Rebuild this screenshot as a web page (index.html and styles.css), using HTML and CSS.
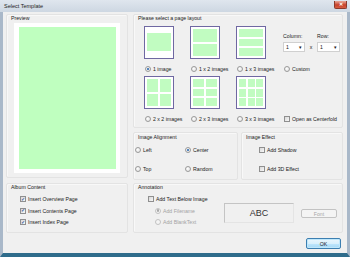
FILE: index.html
```html
<!DOCTYPE html>
<html lang="en">
<head>
    <meta charset="UTF-8">
    <title>Select Template</title>
    <link rel="stylesheet" href="styles.css">
</head>
<body>
<div class="window">
    <div class="titlebar">
        <span class="title">Select Template</span>
        <span class="close">✕</span>
    </div>
    <div class="client">
        <div class="top">
            <section class="group preview-group">
                <div class="legend">Preview</div>
                <div class="preview"><div class="preview-img"></div></div>
            </section>

            <div class="right">
                <section class="group layout-group">
                    <div class="legend">Please select a page layout</div>
                    <div class="layouts">
                        <div class="cell">
                            <div class="thumb t1"><i></i></div>
                            <div class="opt"><span class="radio checked"></span>1 image</div>
                        </div>
                        <div class="cell">
                            <div class="thumb t12"><i></i><i></i></div>
                            <div class="opt"><span class="radio"></span>1 x 2 images</div>
                        </div>
                        <div class="cell">
                            <div class="thumb t13"><i></i><i></i><i></i></div>
                            <div class="opt"><span class="radio"></span>1 x 3 images</div>
                        </div>
                        <div class="cell">
                            <div class="combos">
                                <div class="combo-col">
                                    <span>Column:</span>
                                    <div class="combo">1<b>▾</b></div>
                                </div>
                                <span class="times">x</span>
                                <div class="combo-col row-col">
                                    <span>Row:</span>
                                    <div class="combo">1<b>▾</b></div>
                                </div>
                            </div>
                            <div class="opt"><span class="radio"></span>Custom</div>
                        </div>

                        <div class="cell">
                            <div class="thumb t22"><i></i><i></i><i></i><i></i></div>
                            <div class="opt"><span class="radio"></span>2 x 2 images</div>
                        </div>
                        <div class="cell">
                            <div class="thumb t23"><i></i><i></i><i></i><i></i><i></i><i></i></div>
                            <div class="opt"><span class="radio"></span>2 x 3 images</div>
                        </div>
                        <div class="cell">
                            <div class="thumb t33"><i></i><i></i><i></i><i></i><i></i><i></i><i></i><i></i><i></i></div>
                            <div class="opt"><span class="radio"></span>3 x 3 images</div>
                        </div>
                        <div class="cell">
                            <div class="spacer"></div>
                            <div class="opt"><span class="check"></span>Open as Centerfold</div>
                        </div>
                    </div>
                </section>

                <div class="row2">
                    <section class="group align-group">
                        <div class="legend">Image Alignment</div>
                        <div class="align-grid">
                            <div class="opt"><span class="radio"></span>Left</div>
                            <div class="opt"><span class="radio checked"></span>Center</div>
                            <div class="opt"><span class="radio"></span>Top</div>
                            <div class="opt"><span class="radio"></span>Random</div>
                        </div>
                    </section>
                    <section class="group effect-group">
                        <div class="legend">Image Effect</div>
                        <div class="effect-list">
                            <div class="opt"><span class="check"></span>Add Shadow</div>
                            <div class="opt"><span class="check"></span>Add 3D Effect</div>
                        </div>
                    </section>
                </div>
            </div>
        </div>

        <div class="bottom">
            <section class="group album-group">
                <div class="legend">Album Content</div>
                <div class="album-list">
                    <div class="opt"><span class="check checked"></span>Insert Overview Page</div>
                    <div class="opt"><span class="check checked"></span>Insert Contents Page</div>
                    <div class="opt"><span class="check checked"></span>Insert Index Page</div>
                </div>
            </section>
            <section class="group annot-group">
                <div class="legend">Annotation</div>
                <div class="annot-body">
                    <div class="annot-list">
                        <div class="opt"><span class="check"></span>Add Text Below Image</div>
                        <div class="opt sub disabled"><span class="radio checked"></span>Add Filename</div>
                        <div class="opt sub disabled"><span class="radio"></span>Add BlankText</div>
                    </div>
                    <div class="sample">ABC</div>
                    <button class="btn font-btn" disabled>Font</button>
                </div>
            </section>
        </div>

        <div class="actions">
            <button class="btn ok">OK</button>
        </div>
    </div>
</div>
</body>
</html>
```

FILE: styles.css
```css
body {
    margin: 0;
    font-family: 'Liberation Sans', Arial, sans-serif;
    font-size: 5.2px;
    color: #1a1a1a;
    background: #f0f0f0;
}
.window {
    width: 350px;
    height: 257px;
    background: #f0f0f0;
}
.titlebar {
    height: 12px;
    display: flex;
    justify-content: space-between;
    align-items: flex-start;
    background: linear-gradient(#dfe6ee, #cdd7e2);
}
.title {
    margin-left: 4px;
    line-height: 12px;
    font-size: 5.5px;
    color: #222;
}
.close {
    width: 13px;
    height: 8px;
    margin: 1px 3px 0 0;
    border-radius: 0 0 2px 2px;
    background: linear-gradient(#e9a99a, #c7432c 55%, #d75c40);
    border: 1px solid #8b3a2c;
    border-top: none;
    box-sizing: border-box;
    color: #fff;
    font-size: 5px;
    line-height: 7px;
    text-align: center;
    font-weight: bold;
}
.client {
    height: 245px;
    box-sizing: border-box;
    border-left: 3px solid #a9b8c9;
    border-right: 3px solid #a9b8c9;
    border-bottom: 4px solid #2f6c8b;
    padding: 2px 4px 0 3px;
}
.group {
    box-sizing: border-box;
    border: 1px solid #e3e3e3;
    border-radius: 2px;
    box-shadow: inset 1px 1px 0 #f8f8f8;
}
.legend {
    height: 7px;
    line-height: 7px;
    padding-left: 4px;
    white-space: nowrap;
}

/* top area */
.top {
    display: flex;
    gap: 5px;
    height: 166px;
}
.preview-group {
    width: 122px;
    height: 164px;
}
.preview {
    width: 106px;
    height: 150px;
    margin: 1px 0 0 7px;
    padding: 4px 4px 4px 5px;
    box-sizing: border-box;
    background: #fff;
}
.preview-img {
    height: 100%;
    background: #bfffbf;
}
.right {
    width: 210px;
    display: flex;
    flex-direction: column;
    gap: 4px;
}
.layout-group {
    height: 114px;
}
.layouts {
    display: grid;
    grid-template-columns: 46px 46px 47px 1fr;
    row-gap: 3px;
    margin: 4px 0 0 10px;
}
.cell {
    display: flex;
    flex-direction: column;
}
.thumb {
    width: 30px;
    height: 33px;
    box-sizing: border-box;
    border: 1px solid #6f68a2;
    background: #fff;
    padding: 2px;
    display: grid;
    gap: 2px;
}
.thumb i {
    background: #c1fcc1;
}
.t1 {
    padding: 6px 2px 7px 2px;
}
.t12 {
    grid-template-rows: 1fr 1fr;
}
.t13 {
    grid-template-rows: 1fr 1fr 1fr;
}
.t22 {
    grid-template-columns: 1fr 1fr;
    grid-template-rows: 1fr 1fr;
}
.t23 {
    grid-template-columns: 1fr 1fr;
    grid-template-rows: 1fr 1fr 1fr;
}
.t33 {
    grid-template-columns: 1fr 1fr 1fr;
    grid-template-rows: 1fr 1fr 1fr;
    gap: 1.5px;
}
.spacer {
    height: 33px;
}
.combos {
    height: 33px;
    box-sizing: border-box;
    padding-top: 7px;
    display: flex;
    align-items: flex-start;
}
.combo-col {
    width: 22px;
    display: flex;
    flex-direction: column;
    gap: 2px;
    line-height: 7px;
}
.row-col {
    width: 23px;
}
.times {
    width: 12px;
    text-align: center;
    margin-top: 11px;
    line-height: 7px;
}
.combo {
    height: 10px;
    box-sizing: border-box;
    border: 1px solid #d0d0d0;
    background: #fff;
    display: flex;
    justify-content: space-between;
    align-items: center;
    padding: 0 2px 0 2px;
}
.combo b {
    font-weight: normal;
    font-size: 5px;
}
.opt {
    height: 8px;
    display: flex;
    align-items: center;
    gap: 2px;
    white-space: nowrap;
}
.cell .opt {
    margin-top: 6px;
    margin-left: 1px;
}
.radio {
    width: 6px;
    height: 6px;
    box-sizing: border-box;
    border-radius: 50%;
    border: 1px solid #9a9a9a;
    background: radial-gradient(circle at 40% 40%, #fff, #dcdcdc);
    display: flex;
    align-items: center;
    justify-content: center;
    flex: none;
}
.radio.checked::after {
    content: "";
    width: 2.5px;
    height: 2.5px;
    border-radius: 50%;
    background: #1f5fa8;
}
.check {
    width: 6px;
    height: 6px;
    box-sizing: border-box;
    border: 1px solid #8f8f8f;
    background: linear-gradient(135deg, #d9d9d9, #f7f7f7);
    flex: none;
    display: flex;
    align-items: center;
    justify-content: center;
    font-size: 5px;
    line-height: 5px;
    color: #2a4f9a;
}
.check.checked::after {
    content: "✓";
    font-weight: bold;
}

/* alignment & effect */
.row2 {
    display: flex;
    gap: 3px;
    height: 48px;
}
.row2 .legend {
    margin-top: 1px;
}
.align-group {
    width: 105px;
}
.align-grid {
    display: grid;
    grid-template-columns: 50px 1fr;
    row-gap: 11px;
    margin: 5px 0 0 1px;
}
.effect-group {
    width: 102px;
}
.effect-list {
    display: flex;
    flex-direction: column;
    gap: 11px;
    margin: 5px 0 0 17px;
}

/* bottom area */
.bottom {
    display: flex;
    gap: 5px;
    height: 50px;
    margin-top: 3px;
}
.album-group {
    width: 122px;
}
.album-list {
    display: flex;
    flex-direction: column;
    gap: 3.5px;
    margin: 4px 0 0 13px;
}
.annot-group {
    width: 210px;
}
.annot-body {
    display: flex;
    align-items: flex-start;
    margin: 4px 0 0 14px;
}
.annot-list {
    width: 76px;
    display: flex;
    flex-direction: column;
    gap: 3.5px;
}
.sub {
    padding-left: 7px;
}
.disabled {
    color: #a3a3a3;
}
.disabled .radio {
    border-color: #c2c2c2;
    background: #f4f4f4;
}
.disabled .radio.checked::after {
    background: #a8a8a8;
}
.sample {
    width: 70px;
    height: 20px;
    margin-top: 8px;
    box-sizing: border-box;
    border: 1px solid #c4c4c4;
    border-right-color: #e4e4e4;
    border-bottom-color: #e4e4e4;
    display: flex;
    align-items: center;
    justify-content: center;
    font-size: 9px;
    color: #333;
}
.btn {
    font-family: inherit;
    font-size: 5.2px;
    padding: 0;
    box-sizing: border-box;
    border-radius: 2px;
}
.font-btn {
    width: 36px;
    height: 9px;
    margin: 14px 0 0 7px;
    border: 1px solid #c3c3c3;
    background: #f4f4f4;
    color: #a6a6a6;
}
.actions {
    display: flex;
    justify-content: flex-end;
    margin-top: 5px;
    padding-right: 2px;
}
.ok {
    width: 35px;
    height: 11px;
    border: 1px solid #3c7fb1;
    background: linear-gradient(#eaf6fd, #d9f0fc 50%, #bee6fd 51%, #a7d9f5);
    color: #1a1a1a;
    box-shadow: inset 0 0 0 1px #bfe7fb;
}
```
